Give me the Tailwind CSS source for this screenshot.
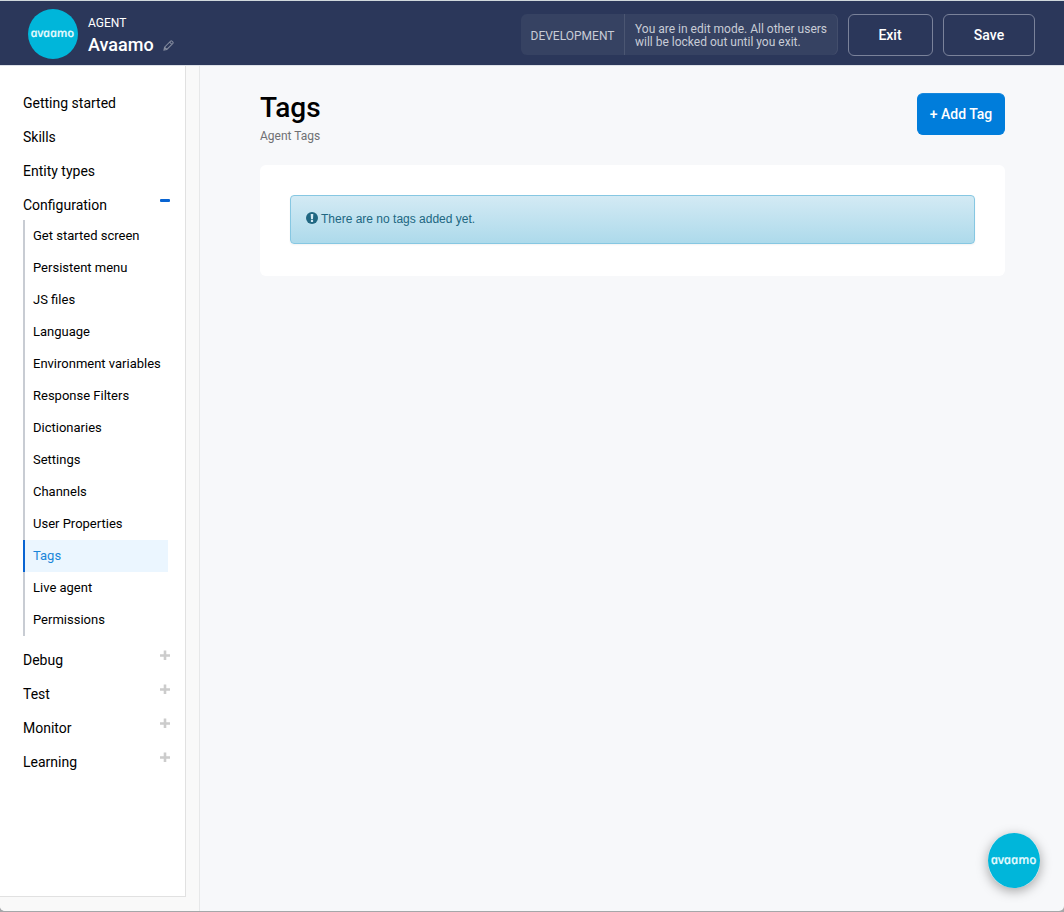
<!DOCTYPE html>
<html lang="en">
<head>
<meta charset="utf-8">
<title>Avaamo - Tags</title>
<script src="https://cdn.jsdelivr.net/npm/@tailwindcss/browser@4"></script>
</head>
<body class="w-[1064px] h-[912px] overflow-hidden bg-[#a5a7a9] font-['Roboto',sans-serif] text-black">
<div class="flex flex-col h-[911px] rounded-b-[5px] overflow-hidden bg-[#f7f8fa]">
  <header class="flex h-[66px] shrink-0 items-start border-t border-t-[#d0d8dc] border-b border-b-[#dde1e8] bg-[#2b375a] pl-[28px] pr-[29px] text-white">
    <svg class="mt-2 size-[50px] shrink-0" viewBox="0 0 50 50">
      <circle cx="25" cy="25" r="25" fill="#00b6da"/>
      <text transform="translate(3.300 28.200) skewX(12)" textLength="43.500" lengthAdjust="spacingAndGlyphs" font-family="Noto Sans, sans-serif" font-style="italic" font-size="11.500" font-weight="500" fill="#e6fbff" stroke="#e6fbff" stroke-width=".2">avaamo</text>
    </svg>
    <div class="ml-[10px] mt-[14px]">
      <div class="text-[12px] leading-4">AGENT</div>
      <div class="mt-[3px] flex items-center">
        <span class="text-[18px] leading-[22px] font-medium">Avaamo</span>
        <svg class="ml-[9px] size-[11px]" viewBox="0 0 12 12" fill="none" stroke="#848b9e" stroke-width="1.100"><path d="M1 11l.7-3.2L8.3 1.2q.7-.6 1.4 0l1.1 1.1q.6.7 0 1.4L4.200 10.300ZM7.200 2.300l2.500 2.500M1.700 7.800l2.500 2.500"/></svg>
      </div>
    </div>
    <div class="ml-auto mt-[13px] flex h-[41px] w-[317px] items-stretch rounded-[6px] bg-[#364262] text-[#c8ccd6] shadow-[inset_-1px_0_#434e6c]">
      <div class="flex w-[104px] items-center justify-center border-r border-[#4b5672] pt-[2px] text-[12px]">DEVELOPMENT</div>
      <div class="pl-[10px] pt-[9px] text-[12px] leading-[13px] whitespace-nowrap">You are in edit mode. All other users<br>will be locked out until you exit.</div>
    </div>
    <button class="ml-[10px] mt-[13px] h-[42px] w-[85px] rounded-[6px] border border-[#7a829a] pr-[1px] text-[14px] font-medium">Exit</button>
    <button class="ml-[10px] mt-[13px] h-[42px] w-[92px] rounded-[6px] border border-[#7a829a] text-[14px] font-medium">Save</button>
  </header>
  <div class="flex min-h-0 flex-1">
    <aside class="w-[200px] shrink-0 border-r border-[#e7e8e9] bg-[#f9f9f9]">
      <nav class="h-[831px] w-[186px] border-r border-b border-[#e1e1e1] bg-white pl-[23px] pt-[20px] text-[14px] leading-[34px]">
        <div>Getting started</div>
        <div>Skills</div>
        <div>Entity types</div>
        <div class="flex h-[32px] justify-between pr-[15px]"><span>Configuration</span><span class="mt-[11px] h-[3px] w-[10px] rounded-[1px] bg-[#0864d2]"></span></div>
        <ul class="mb-[7px] w-[145px] text-[13px] leading-[32px]">
          <li class="border-l-2 border-[#c8ccd3] pl-2">Get started screen</li>
          <li class="border-l-2 border-[#c8ccd3] pl-2">Persistent menu</li>
          <li class="border-l-2 border-[#c8ccd3] pl-2">JS files</li>
          <li class="border-l-2 border-[#c8ccd3] pl-2">Language</li>
          <li class="border-l-2 border-[#c8ccd3] pl-2 whitespace-nowrap">Environment variables</li>
          <li class="border-l-2 border-[#c8ccd3] pl-2">Response Filters</li>
          <li class="border-l-2 border-[#c8ccd3] pl-2">Dictionaries</li>
          <li class="border-l-2 border-[#c8ccd3] pl-2">Settings</li>
          <li class="border-l-2 border-[#c8ccd3] pl-2">Channels</li>
          <li class="border-l-2 border-[#c8ccd3] pl-2">User Properties</li>
          <li class="border-l-2 border-[#0864d2] bg-[#ebf6ff] pl-2 text-[#1a86d9]">Tags</li>
          <li class="border-l-2 border-[#c8ccd3] pl-2">Live agent</li>
          <li class="border-l-2 border-[#c8ccd3] pl-2">Permissions</li>
        </ul>
        <div class="flex justify-between pr-[15px]"><span>Debug</span><svg class="mt-[7px] size-[10px]" viewBox="0 0 10 10"><path d="M5 0.500v9.500M0 5.500h10" stroke="#ccc" stroke-width="2.600"/></svg></div>
        <div class="flex justify-between pr-[15px]"><span>Test</span><svg class="mt-[7px] size-[10px]" viewBox="0 0 10 10"><path d="M5 0.500v9.500M0 5.500h10" stroke="#ccc" stroke-width="2.600"/></svg></div>
        <div class="flex justify-between pr-[15px]"><span>Monitor</span><svg class="mt-[7px] size-[10px]" viewBox="0 0 10 10"><path d="M5 0.500v9.500M0 5.500h10" stroke="#ccc" stroke-width="2.600"/></svg></div>
        <div class="flex justify-between pr-[15px]"><span>Learning</span><svg class="mt-[7px] size-[10px]" viewBox="0 0 10 10"><path d="M5 0.500v9.500M0 5.500h10" stroke="#ccc" stroke-width="2.600"/></svg></div>
      </nav>
    </aside>
    <main class="flex-1 pl-[60px] pr-[59px] pt-[27px]">
      <div class="flex h-[72px] justify-between">
        <div>
          <h1 class="text-[28px] leading-[30px] font-medium">Tags</h1>
          <p class="mt-[5px] text-[12px] leading-4 text-[#6f7073]">Agent Tags</p>
        </div>
        <button class="h-[42px] w-[88px] rounded-[6px] border border-[#007ddb] border-t-[#1787dc] bg-[#007ddb] text-[14px] font-medium text-white">+ Add Tag</button>
      </div>
      <section class="h-[111px] rounded-[6px] bg-white p-[30px]">
        <div class="flex h-[49px] items-start rounded-[4px] border border-[#86c7e2] bg-linear-to-b from-[#d3eaf4] to-[#addaeb] pl-[15px] pt-[14px] text-[#206782] shadow-[0_1px_2px_rgba(0,0,0,0.05)]">
          <svg class="mt-[2px] size-[12px]" viewBox="0 0 12 12"><circle cx="6" cy="6" r="6" fill="#206782"/><path d="M4.700 2h2.600l-.3 4.900h-2zM4.900 7.800h2.200v2.200H4.900z" fill="#d3eaf4"/></svg>
          <span class="ml-[3px] font-['Liberation_Sans',sans-serif] text-[12px] leading-[18px]">There are no tags added yet.</span>
        </div>
      </section>
    </main>
  </div>
</div>
<button class="absolute left-[988px] top-[833px] h-[55px] w-[52px] rounded-full shadow-[0_3px_12px_rgba(0,0,0,0.35)]" aria-label="Open chat">
  <svg class="h-[55px] w-[52px]" viewBox="0 0 52 55">
    <ellipse cx="26" cy="27.500" rx="26" ry="27.500" fill="#00b6da"/>
    <text transform="translate(3.500 30.700) skewX(12)" textLength="45.500" lengthAdjust="spacingAndGlyphs" font-family="Noto Sans, sans-serif" font-style="italic" font-size="12.500" font-weight="500" fill="#e6fbff" stroke="#e6fbff" stroke-width=".2">avaamo</text>
  </svg>
</button>
</body>
</html>
